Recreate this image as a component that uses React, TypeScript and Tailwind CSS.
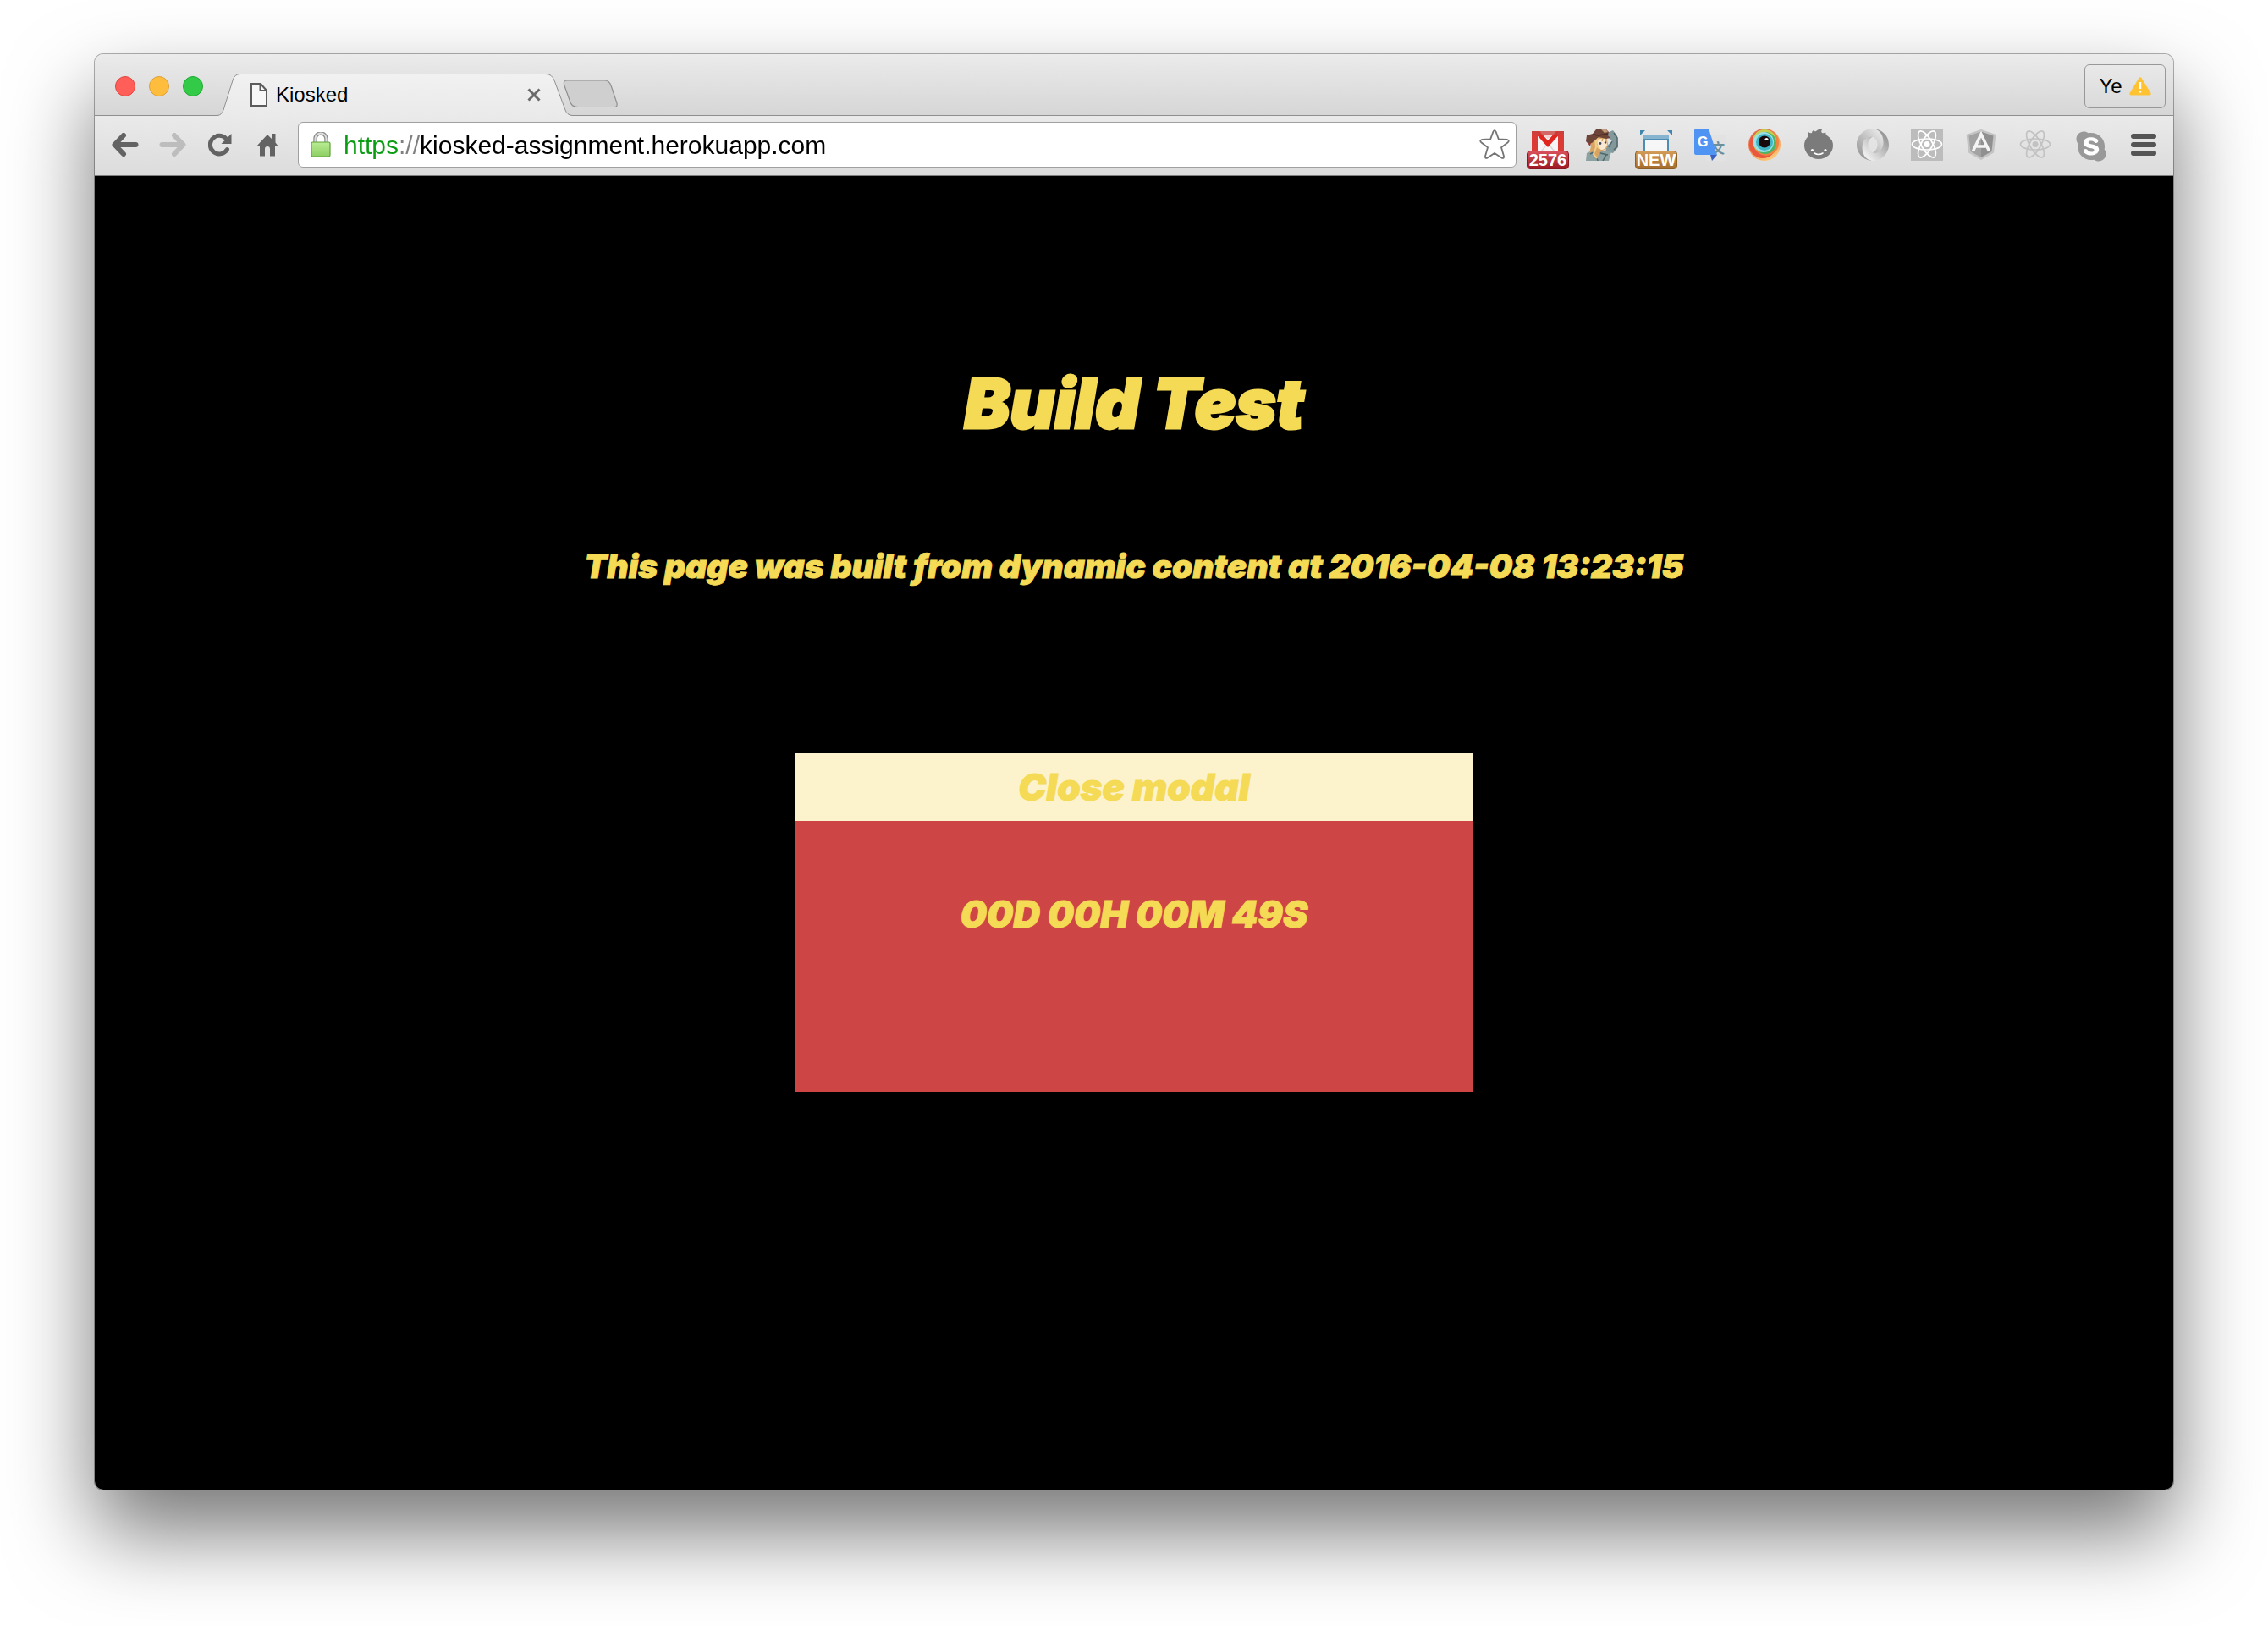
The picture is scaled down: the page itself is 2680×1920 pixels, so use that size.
import React from "react";
import { FaSkype } from "react-icons/fa";

function BackIcon({ light = false }: { light?: boolean }) {
  return (
    <svg width="32" height="28" viewBox="0 0 32 28" fill="none" className={light ? "-scale-x-100" : ""}>
      <path
        d="M14 3 L3.5 14 L14 25 M4 14 H28.5"
        stroke={light ? "#bdbdbd" : "#636363"}
        strokeWidth="6"
        strokeLinecap="round"
        strokeLinejoin="round"
      />
    </svg>
  );
}

function ReloadIcon() {
  return (
    <svg width="28" height="28" viewBox="0 0 28 28" fill="none">
      <path d="M22.5 19.5 A10.8 10.8 0 1 1 20.5 6.2" stroke="#636363" strokeWidth="5" strokeLinecap="round" />
      <path d="M27.5 1 V13 H15.5 Z" fill="#636363" />
    </svg>
  );
}

function HomeIcon() {
  return (
    <svg width="26" height="28" viewBox="0 0 26 28" fill="#636363">
      <path d="M13 2 L18.5 7.5 V1 H22.5 V11.5 L26 16 H22 V27.5 H16 V19 Q16 16 13 16 Q10 16 10 19 V27.5 H4 V16 H0 Z" />
    </svg>
  );
}

function PageIcon() {
  return (
    <svg width="22" height="28" viewBox="0 0 22 28" fill="none" stroke="#5c5c5c" strokeWidth="2">
      <path d="M2 1 H13 L20 9 V27 H2 Z" fill="#f7f7f7" />
      <path d="M12.5 1.5 V9 H20" />
    </svg>
  );
}

function LockIcon() {
  return (
    <svg width="24" height="30" viewBox="0 0 24 30">
      <defs>
        <linearGradient id="lockBody" x1="0" y1="0" x2="0" y2="1">
          <stop offset="0" stopColor="#b9ec93" />
          <stop offset="1" stopColor="#8dcf63" />
        </linearGradient>
      </defs>
      <path d="M5.5 13 V8 A6.5 6.5 0 0 1 18.5 8 V13" fill="none" stroke="#8e8e8e" strokeWidth="4.5" />
      <path d="M5.5 13 V8 A6.5 6.5 0 0 1 18.5 8 V13" fill="none" stroke="#dedede" strokeWidth="2" />
      <rect x="1" y="12" width="22" height="17" rx="1.5" fill="url(#lockBody)" stroke="#5fa23c" strokeWidth="1.2" />
    </svg>
  );
}

function StarIcon() {
  return (
    <svg width="38" height="38" viewBox="0 0 38 38" fill="none" stroke="#757575" strokeWidth="1.8" strokeLinejoin="round">
      <path d="M17.4 3.6 Q19 0.8 20.6 3.6 L23.8 12.4 L34 13 Q37 13.8 34.8 16.2 L27 22.2 L30 32.6 Q30.4 35.8 27.4 34.6 L19 29 L10.6 34.6 Q7.6 35.8 8 32.6 L11 22.2 L3.2 16.2 Q1 13.8 4 13 L14.2 12.4 Z" />
    </svg>
  );
}

function WarningIcon() {
  return (
    <svg width="26" height="22" viewBox="0 0 26 22">
      <path d="M11.4 1.2 Q13 -0.8 14.6 1.2 L25.5 19 Q26.3 21.5 24 21.5 H2 Q-0.3 21.5 0.5 19 Z" fill="#ffc233" />
      <path d="M11.8 6 H14.2 V14 H11.8 Z M11.8 16 H14.2 V18.4 H11.8 Z" fill="#fff" />
    </svg>
  );
}

function GmailIcon() {
  return (
    <svg width="38" height="38" viewBox="0 0 38 38">
      <rect x="0" y="3" width="38" height="30" rx="1" fill="#e33531" />
      <path d="M7 5 H31 V33 H7 Z" fill="#f6f4f4" />
      <path d="M7 32 L16 21 M31 32 L22 21" stroke="#dcd6d6" strokeWidth="1.5" />
      <path d="M2 3 H9 L19 14 L29 3 H36 L19 22 Z" fill="#e1251f" />
      <path d="M0 3 H7 V33 H0 Z M31 3 H38 V33 H31 Z" fill="#dc3a35" />
      <path d="M9 3 H29 L19 12 Z" fill="#f3d3d1" />
      <path d="M0 3 H38 V7 H0 Z" fill="#c9423e" opacity="0.75" />
    </svg>
  );
}

function PortraitIcon() {
  return (
    <svg width="38" height="38" viewBox="0 0 38 38">
      <path d="M25 5 L32 2 L37 9 L38 22 L32 29 L23 27 L25 20 L31 15 L27 11 Z" fill="#82989a" />
      <path d="M33 5 L37 11 L37 21 L33 25 M31 15 L27 22" fill="none" stroke="#52676b" strokeWidth="1.5" />
      <path d="M0 38 L1 29 L9 25 L22 26 L30 27 L27 38 Z" fill="#8ba1a2" />
      <path d="M5 30 L11 27 L14 38 M17 29 L26 31 M20 38 L24 31" fill="none" stroke="#50676b" strokeWidth="1.5" />
      <path d="M6 14 L11 10 L24 9 L26 18 L24 24 L16 28 L13 36 L8 27 L4 29 L6 21 Z" fill="#d9a463" />
      <path d="M13 14 Q18 10 24 13 L25 19 Q23 25 18 25 Q14 23 13 14 Z" fill="#fbe8d3" />
      <path d="M8 15 L11 12 L12 22 L9 30 L13 35 M14 11 L12 19 L16 24" fill="none" stroke="#f1cd85" strokeWidth="2" />
      <path d="M20 11 L19 15 M23 11 L24 16" stroke="#d9a463" strokeWidth="1.5" />
      <circle cx="17" cy="17.5" r="1.4" fill="#3f4a56" />
      <circle cx="23" cy="16.5" r="1.2" fill="#3f4a56" />
      <path d="M0 15 L1 8 L8 6 L12 1 L23 0 L27 4 L26 8 L29 11 L24 12 L15 10 L7 17 L3 18 Z" fill="#6d4438" />
      <path d="M8 7 L15 8 L26 6" fill="none" stroke="#4c2a22" strokeWidth="1.3" />
      <path d="M18 1 L23 0 L26 4 L22 5 Z" fill="#c39b78" />
      <path d="M2 17 L6 17 L5 21 Z" fill="#983a2c" />
    </svg>
  );
}

function CaptureIcon() {
  return (
    <svg width="38" height="38" viewBox="0 0 38 38">
      <path d="M0 2 H6 L0 8 Z M38 2 H32 L38 8 Z" fill="#3f86ae" />
      <rect x="4" y="8" width="30" height="28" fill="#4d8db3" />
      <rect x="4" y="8" width="30" height="4" fill="#86b4d0" />
      <rect x="6" y="14" width="26" height="20" fill="#f6f6f6" />
    </svg>
  );
}

function TranslateIcon() {
  return (
    <svg width="38" height="38" viewBox="0 0 38 38">
      <rect x="14" y="7" width="24" height="31" rx="2" fill="#e2e2e2" />
      <text x="20" y="29" fontSize="16" fontWeight="700" fill="#6d8f9b" fontFamily='"Noto Sans CJK SC", sans-serif'>
        文
      </text>
      <path d="M2 0 H17 L27 31 H2 Q0 31 0 29 V2 Q0 0 2 0 Z" fill="#5094f3" />
      <path d="M19 31 H27 L21 38 Z" fill="#3a5fc0" />
      <text x="4" y="21" fontSize="16" fontWeight="700" fill="#fff" fontFamily='"Liberation Sans", sans-serif'>
        G
      </text>
    </svg>
  );
}

function EyeIcon() {
  return (
    <svg width="38" height="38" viewBox="0 0 38 38">
      <defs>
        <linearGradient id="eyeRim" x1="0" y1="0" x2="0.6" y2="1">
          <stop offset="0" stopColor="#e25a4e" />
          <stop offset="0.55" stopColor="#f08a4b" />
          <stop offset="1" stopColor="#fbc877" />
        </linearGradient>
      </defs>
      <circle cx="19" cy="19" r="19" fill="url(#eyeRim)" />
      <circle cx="17" cy="19" r="16" fill="#e9573f" />
      <circle cx="21" cy="17" r="15" fill="#f0823f" />
      <circle cx="19" cy="15" r="14" fill="#c5cf53" />
      <circle cx="20" cy="17" r="13" fill="#4cb567" />
      <circle cx="18" cy="16" r="12" fill="#9fdfe6" />
      <circle cx="19" cy="16" r="10" fill="#3fb5c6" />
      <circle cx="19" cy="15.500" r="7" fill="#170a0d" />
      <ellipse cx="21.500" cy="12.500" rx="2" ry="1.600" fill="#fff" />
    </svg>
  );
}

function SproutIcon() {
  return (
    <svg width="38" height="38" viewBox="0 0 38 38">
      <path
        d="M2 20 Q2 13 7 9 Q6 6 7 4 Q9 6 11 5 Q11 3 13 2 Q14 4 16 3 Q19 0 24 0 Q21 3 23 5 Q25 6 27 4 Q27 7 30 9 Q36 13 36 20 A17 16 0 0 1 2 20 Z"
        fill="#7b7b7b"
      />
      <circle cx="11.500" cy="25.500" r="1.600" fill="#fff" />
      <circle cx="27" cy="25.500" r="1.600" fill="#fff" />
      <path d="M14 29 Q19 32 24 29" fill="none" stroke="#fff" strokeWidth="1.600" strokeLinecap="round" />
    </svg>
  );
}

function JsonRingIcon() {
  return (
    <svg width="38" height="38" viewBox="0 0 160 160">
      <defs>
        <linearGradient id="ringA" x1="0.1" y1="0.8" x2="0.8" y2="0.1">
          <stop offset="0" stopColor="#9c9c9c" />
          <stop offset="1" stopColor="#e9e9e9" />
        </linearGradient>
        <linearGradient id="ringB" x1="0.9" y1="0.1" x2="0.2" y2="0.9">
          <stop offset="0" stopColor="#8c8c8c" />
          <stop offset="1" stopColor="#efefef" />
        </linearGradient>
      </defs>
      <path
        fill="url(#ringA)"
        d="M79.865 119.1c35.398 48.255 70.04-13.469 69.989-50.587C149.793 24.627 105.312.1 79.836.1 38.944.1 0 33.895 0 80.135 0 131.531 44.64 160 79.836 160c-7.965-1.147-34.506-6.834-34.863-67.967-.24-41.347 13.488-57.866 34.805-50.599.477.177 23.514 9.265 23.514 38.951 0 29.56-23.427 38.715-23.427 38.715z"
      />
      <path
        fill="url(#ringB)"
        d="M79.823 41.401C56.433 33.339 27.78 52.618 27.78 91.23c0 63.048 46.721 68.77 52.384 68.77C121.056 160 160 126.204 160 79.964 160 28.568 115.36.1 80.164.1c9.748-1.35 52.541 10.55 52.541 69.037 0 38.141-31.953 58.905-52.735 50.033-.477-.178-23.514-9.265-23.514-38.951 0-29.56 23.367-38.818 23.367-38.818z"
      />
    </svg>
  );
}

function AtomIcon({ boxed = false }: { boxed?: boolean }) {
  const color = boxed ? "#fff" : "#c2c2c2";
  return (
    <svg width="38" height="38" viewBox="0 0 38 38">
      {boxed && <rect width="38" height="38" fill="#bcbcbc" />}
      <g fill="none" stroke={color} strokeWidth="1.7">
        <ellipse cx="19" cy="18.5" rx="17.5" ry="6.5" />
        <ellipse cx="19" cy="18.5" rx="17.5" ry="6.5" transform="rotate(60 19 18.5)" />
        <ellipse cx="19" cy="18.5" rx="17.5" ry="6.5" transform="rotate(120 19 18.5)" />
      </g>
      <circle cx="19" cy="18.5" r="3.5" fill={color} />
    </svg>
  );
}

function AngularIcon() {
  return (
    <svg width="38" height="38" viewBox="0 0 38 38">
      <path d="M19 1 L36.5 7 L34 28.5 L19 37 L4 28.5 L1.5 7 Z" fill="#c4c4c4" />
      <path d="M19 3.5 L33.5 8.5 L31.5 27 L19 34 Z" fill="#909090" />
      <path d="M19 3.5 L4.5 8.5 L6.5 27 L19 34 Z" fill="#a3a3a3" />
      <path d="M9.5 26.5 L19 6.5 L28.5 26.5 M13.5 21 H24.5" fill="none" stroke="#f4f4f4" strokeWidth="3.5" />
    </svg>
  );
}

function SkypeIcon() {
  return (
    <span className="grid size-9 place-items-center bg-[radial-gradient(circle,#fff_0_50%,transparent_51%)]">
      <FaSkype size={40} color="#999999" />
    </span>
  );
}

function MenuIcon() {
  return (
    <svg width="30" height="26" viewBox="0 0 30 26" fill="#555">
      <rect y="0" width="30" height="6" rx="3" />
      <rect y="10" width="30" height="6" rx="3" />
      <rect y="20" width="30" height="6" rx="3" />
    </svg>
  );
}

const extensions: { name: string; icon: React.ReactNode; badge?: string; badgeClass?: string }[] = [
  {
    name: "Gmail",
    icon: <GmailIcon />,
    badge: "2576",
    badgeClass: "border-[#8c1822] bg-linear-to-b from-[#d8505c] to-[#9d1722]",
  },
  { name: "Portrait", icon: <PortraitIcon /> },
  {
    name: "Screen capture",
    icon: <CaptureIcon />,
    badge: "NEW",
    badgeClass: "border-[#8f6026] bg-linear-to-b from-[#d39b58] to-[#a56b2a]",
  },
  { name: "Translate", icon: <TranslateIcon /> },
  { name: "Eye", icon: <EyeIcon /> },
  { name: "Sprout", icon: <SproutIcon /> },
  { name: "JSON", icon: <JsonRingIcon /> },
  { name: "React perf", icon: <AtomIcon boxed /> },
  { name: "Angular", icon: <AngularIcon /> },
  { name: "React tools", icon: <AtomIcon /> },
  { name: "Skype", icon: <SkypeIcon /> },
  { name: "Menu", icon: <MenuIcon /> },
];

function TabStrip() {
  return (
    <div className="flex h-[73px] items-end border-b border-[#8f8f8f] bg-linear-to-b from-[#ebebeb] to-[#d6d6d6] pr-[9px] pl-6">
      <div className="mr-[17px] mb-[22px] flex gap-4">
        <button aria-label="Close window" className="size-6 rounded-full border border-[#e2463f] bg-[#ff5f58]" />
        <button aria-label="Minimise window" className="size-6 rounded-full border border-[#dfa033] bg-[#ffbd3e]" />
        <button aria-label="Zoom window" className="size-6 rounded-full border border-[#1fa832] bg-[#32ca47]" />
      </div>
      <div className="relative -mb-px flex h-[50px] w-[420px] items-center pr-[38px] pl-[38px]">
        <svg className="absolute inset-0" width="420" height="50" viewBox="0 0 420 50">
          <defs>
            <linearGradient id="tabFill" x1="0" y1="0" x2="0" y2="1">
              <stop offset="0" stopColor="#f1f1f1" />
              <stop offset="1" stopColor="#eaeaea" />
            </linearGradient>
          </defs>
          <path
            d="M0 49.5 Q5 49 7 43 L18 8 Q20 0.5 27 0.5 H388 Q395 0.5 398 8 L411 43 Q413 49 419 49.5 L419 50 H0 Z"
            fill="url(#tabFill)"
          />
          <path
            d="M0 49.5 Q5 49 7 43 L18 8 Q20 0.5 27 0.5 H388 Q395 0.5 398 8 L411 43 Q413 49 419 49.5"
            fill="none"
            stroke="#8f8f8f"
          />
        </svg>
        <span className="relative flex flex-1 items-center gap-[9px] text-[24px] leading-7">
          <PageIcon />
          Kiosked
        </span>
        <button aria-label="Close tab" className="relative">
          <svg width="16" height="16" viewBox="0 0 16 16" stroke="#6a6a6a" strokeWidth="3">
            <path d="M1.5 1.5 L14.5 14.5 M14.5 1.5 L1.5 14.5" />
          </svg>
        </button>
      </div>
      <button aria-label="New tab" className="mb-2 -ml-3">
        <svg width="66" height="34" viewBox="0 0 66 34">
          <path
            d="M5 1 H49 Q55 1 57 7 L64 28 Q65 32.5 61 32.5 H18 Q11 32.5 9 27 L1.5 6 Q0.5 1 5 1 Z"
            fill="#cfcfcf"
            stroke="#8f8f8f"
            strokeWidth="1.2"
          />
        </svg>
      </button>
      <button className="mb-2 ml-auto flex h-[52px] w-24 items-center justify-center gap-2 rounded-md border border-[#989898] bg-linear-to-b from-[#e9e9e9] to-[#dadada] text-[24px]">
        Ye
        <WarningIcon />
      </button>
    </div>
  );
}

function Toolbar() {
  return (
    <div className="flex h-[71px] items-center border-b border-[#7f7f7f] bg-linear-to-b from-[#eaeaea] to-[#dcdcdc] pr-[3px] pb-0.5 pl-2">
      <button aria-label="Back" className="grid h-14 w-14 place-items-center">
        <BackIcon />
      </button>
      <button aria-label="Forward" className="grid h-14 w-14 place-items-center">
        <BackIcon light />
      </button>
      <button aria-label="Reload" className="grid h-14 w-14 place-items-center">
        <ReloadIcon />
      </button>
      <button aria-label="Home" className="grid h-14 w-14 place-items-center">
        <HomeIcon />
      </button>
      <div className="mr-[5px] ml-2 flex h-[54px] flex-1 items-center gap-[15px] rounded-md border border-[#a0a0a0] bg-white pr-1.5 pl-3.5">
        <LockIcon />
        <input
          aria-label="Address"
          defaultValue="https://kiosked-assignment.herokuapp.com"
          className="h-10 min-w-0 flex-1 bg-[linear-gradient(to_right,#0a9c12_65px,#808080_65px,#808080_90px,#000_90px)] bg-clip-text text-[30px] text-transparent caret-black outline-none"
        />
        <button aria-label="Bookmark this page">
          <StarIcon />
        </button>
      </div>
      {extensions.map((ext) => (
        <button key={ext.name} aria-label={ext.name} className="relative grid h-14 w-16 place-items-center">
          {ext.icon}
          {ext.badge && (
            <span
              className={`absolute -bottom-px flex h-[22px] w-[50px] items-center justify-center rounded-sm border text-[20px] leading-5 font-bold text-white ${ext.badgeClass}`}
            >
              {ext.badge}
            </span>
          )}
        </button>
      ))}
    </div>
  );
}

export default function App() {
  return (
    <div className="flex min-h-screen flex-col bg-white px-28 pt-16 pb-40 font-['Liberation_Sans',Arial,sans-serif] text-black">
      <div className="flex flex-1 flex-col overflow-hidden rounded-[10px] shadow-[0_0_0_1px_rgba(0,0,0,0.3),0_50px_100px_rgba(0,0,0,0.54)]">
        <TabStrip />
        <Toolbar />
        <main className="flex flex-1 flex-col items-center bg-black pt-[221px] text-center font-['Inter',sans-serif] font-black text-[#f5da55] italic">
          <h1 className="text-[81px] leading-24 [-webkit-text-stroke:3px_#f5da55]">Build Test</h1>
          <p className="mt-[120px] text-[39px] leading-12 [-webkit-text-stroke:1px_#f5da55]">
            This page was built from dynamic content at 2016-04-08 13:23:15
          </p>
          <section className="mt-[197px] flex min-h-[400px] w-[800px] flex-col bg-[#cd4545] text-[44px] leading-14 [-webkit-text-stroke:1px_#f5da55]">
            <button className="h-20 bg-[#fcf3cd] font-black italic">Close modal</button>
            <p className="pt-[82px]">00D 00H 00M 49S</p>
          </section>
        </main>
      </div>
    </div>
  );
}
